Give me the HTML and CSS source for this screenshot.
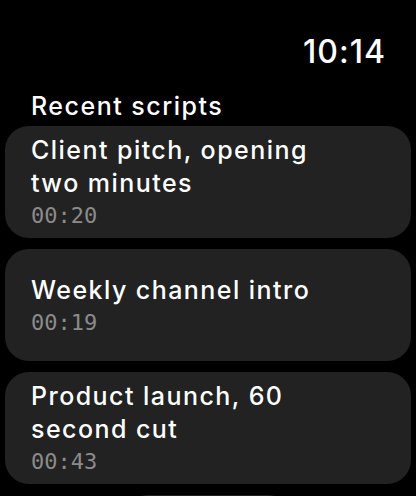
FILE: index.html
```html
<!DOCTYPE html>
<html>
<head>
<meta charset="utf-8">
<link rel="stylesheet" href="styles.css">
</head>
<body>
<div class="screen">
  <header class="status">
    <span class="clock">10:14</span>
  </header>
  <h1 class="heading">Recent scripts</h1>
  <ul class="list">
    <li class="card">
      <div class="title">Client pitch, opening two minutes</div>
      <div class="dur">00:20</div>
    </li>
    <li class="card">
      <div class="title">Weekly channel intro</div>
      <div class="dur">00:19</div>
    </li>
    <li class="card">
      <div class="title">Product launch, 60 second cut</div>
      <div class="dur">00:43</div>
    </li>
  </ul>
  <div class="more"></div>
</div>
</body>
</html>
```
FILE: styles.css
```css
html, body {
  margin: 0;
  padding: 0;
  background: #000;
}
body {
  width: 416px;
  height: 496px;
  overflow: hidden;
  font-family: Inter, "Noto Sans", sans-serif;
  color: #fff;
}
.screen {
  display: flex;
  flex-direction: column;
  padding: 32px 5px 0 5px;
}
.status {
  display: flex;
  justify-content: flex-end;
  padding-right: 25px;
}
.clock {
  font-size: 32px;
  line-height: 40px;
  font-weight: 500;
  letter-spacing: 1px;
}
.heading {
  margin: 18px 0 0 26px;
  font-size: 25px;
  line-height: 32px;
  font-weight: 500;
  letter-spacing: 1.5px;
}
.list {
  list-style: none;
  margin: 0;
  padding: 0;
  display: flex;
  flex-direction: column;
  gap: 11px;
  margin-top: 4px;
}
.card {
  background: #222222;
  border-radius: 24px;
  min-height: 112px;
  box-sizing: border-box;
  padding: 0 50px 0 26px;
  display: flex;
  flex-direction: column;
  justify-content: center;
}
.title {
  font-size: 25px;
  line-height: 33px;
  font-weight: 500;
  letter-spacing: 1.45px;
}
.dur {
  font-family: "DejaVu Sans Mono", "Liberation Mono", monospace;
  font-size: 22px;
  line-height: 28px;
  color: #8b8b8b;
  margin-top: 2px;
}
.more {
  align-self: center;
  width: 160px;
  height: 40px;
  border-radius: 20px;
  background: #222222;
  margin-top: 11px;
}
```
